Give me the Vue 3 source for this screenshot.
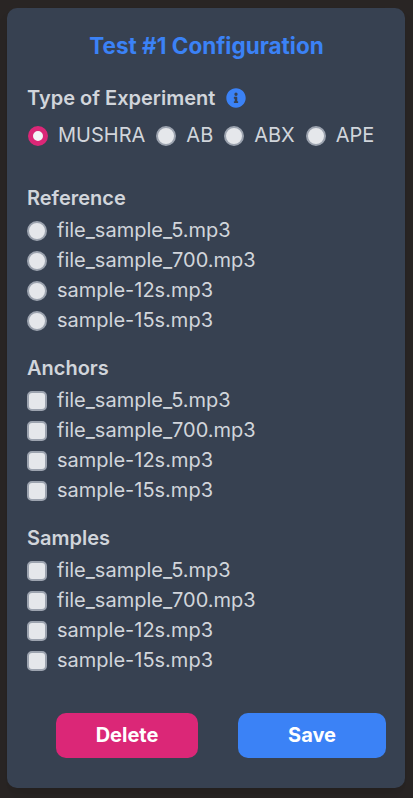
<script setup>
import { ref } from 'vue'

const types = ['MUSHRA', 'AB', 'ABX', 'APE']
const files = ['file_sample_5.mp3', 'file_sample_700.mp3', 'sample-12s.mp3', 'sample-15s.mp3']
const selectedType = ref('MUSHRA')
const reference = ref('')
const anchors = ref([])
const samples = ref([])
</script>

<template>
  <main class="page">
    <form class="card" @submit.prevent>
      <h1 class="title">Test #1 Configuration</h1>

      <section class="experiment">
        <h2 class="heading">
          Type of Experiment
          <svg class="info" viewBox="0 0 512 512" aria-hidden="true">
            <path
              fill="currentColor"
              d="M256 8C119 8 8 119 8 256s111 248 248 248 248-111 248-248S393 8 256 8zm0 110a42 42 0 1 1 0 84 42 42 0 0 1 0-84zm56 254a12 12 0 0 1-12 12h-88a12 12 0 0 1-12-12v-24a12 12 0 0 1 12-12h12v-64h-12a12 12 0 0 1-12-12v-24a12 12 0 0 1 12-12h64a12 12 0 0 1 12 12v100h12a12 12 0 0 1 12 12z"
            />
          </svg>
        </h2>
        <div class="types">
          <label v-for="t in types" :key="t" class="type">
            <input v-model="selectedType" class="control round" type="radio" name="type" :value="t" />
            <span>{{ t }}</span>
          </label>
        </div>
      </section>

      <section class="group">
        <h2 class="heading">Reference</h2>
        <label v-for="f in files" :key="f" class="file">
          <input v-model="reference" class="control round" type="radio" name="reference" :value="f" />
          <span>{{ f }}</span>
        </label>
      </section>

      <section class="group">
        <h2 class="heading">Anchors</h2>
        <label v-for="f in files" :key="f" class="file">
          <input v-model="anchors" class="control" type="checkbox" :value="f" />
          <span>{{ f }}</span>
        </label>
      </section>

      <section class="group">
        <h2 class="heading">Samples</h2>
        <label v-for="f in files" :key="f" class="file">
          <input v-model="samples" class="control" type="checkbox" :value="f" />
          <span>{{ f }}</span>
        </label>
      </section>

      <div class="actions">
        <button class="button delete" type="button">Delete</button>
        <button class="button save" type="submit">Save</button>
      </div>
    </form>
  </main>
</template>

<style>
body {
  margin: 0;
  background: #292524;
}
</style>

<style scoped>
.page {
  box-sizing: border-box;
  height: 798px;
  padding: 8px 8px 10px 7px;
  overflow: hidden;
  background: #292524;
  font-family: Inter, "Liberation Sans", sans-serif;
  font-size: 20px;
  line-height: 30px;
  color: #d1d5db;
}

.card {
  box-sizing: border-box;
  height: 780px;
  padding: 20px 19px 30px 20px;
  border-radius: 10px;
  background: #374151;
  box-shadow: 0 12px 19px -4px rgba(0, 0, 0, 0.1), 0 5px 7px -5px rgba(0, 0, 0, 0.1);
}

.title {
  margin: 0;
  font-size: 22.5px;
  line-height: 35px;
  font-weight: 700;
  text-align: center;
  color: #3b82f6;
}

.experiment {
  margin-top: 20px;
}

.heading {
  display: flex;
  align-items: center;
  gap: 11px;
  margin: 0;
  font-size: 20px;
  line-height: 30px;
  font-weight: 600;
}

.info {
  width: 20px;
  height: 20px;
  color: #3b82f6;
}

.types {
  display: flex;
  gap: 11px;
  padding: 7px 0 0 1px;
}

.type,
.file {
  display: flex;
  align-items: center;
  gap: 10px;
}

.control {
  appearance: none;
  box-sizing: border-box;
  flex: none;
  width: 20px;
  height: 20px;
  margin: 2px 0 0;
  border: 2px solid #9ca3af;
  border-radius: 5px;
  background: #e5e7eb;
}

.round {
  border-radius: 50%;
}

.round:checked {
  border: 5px solid #db2777;
  background: #f3f4f6;
}

.group {
  margin-top: 18px;
}

.group .heading {
  margin-bottom: 2px;
}

.experiment + .group {
  margin-top: 33px;
}

.actions {
  display: flex;
  gap: 40px;
  margin: 38px 0 0 29px;
}

.button {
  height: 45px;
  padding: 0 0 1px;
  border: 0;
  border-radius: 10px;
  font: 700 20px/30px Inter, "Liberation Sans", sans-serif;
  color: #fff;
}

.delete {
  width: 142px;
  background: #db2777;
}

.save {
  width: 148px;
  background: #3b82f6;
}
</style>
